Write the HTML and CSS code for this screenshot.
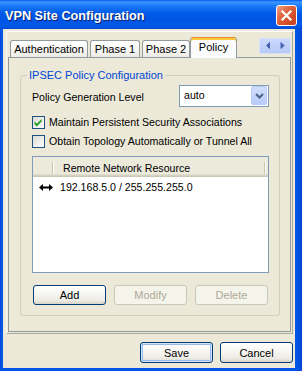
FILE: index.html
```html
<!DOCTYPE html>
<html>
<head>
<meta charset="utf-8">
<title>VPN Site Configuration</title>
<link rel="stylesheet" href="styles.css">
</head>
<body>
<div class="window">
  <div class="titlebar">
    <span class="title">VPN Site Configuration</span>
    <span class="close"><svg width="19" height="19" viewBox="0 0 19 19"><path d="M5.5 5.5 L13.5 13.5 M13.5 5.5 L5.5 13.5" stroke="#fff" stroke-width="2.2" stroke-linecap="square" fill="none"/></svg></span>
  </div>
  <div class="body">
    <div class="frame">
      <div class="tabctl">
        <div class="tabstrip">
          <div class="tab tab-auth">Authentication</div>
          <div class="tab tab-p1">Phase 1</div>
          <div class="tab tab-p2">Phase 2</div>
          <div class="tab tab-sel">Policy</div>
          <div class="scroller">
            <svg width="30" height="14" viewBox="0 0 30 14"><path d="M9.5 3.5 L6.5 6.5 L9.5 9.5 Z M21 3.5 L24 6.5 L21 9.5 Z" fill="#4964B4" stroke="#4964B4" stroke-width="1"/></svg>
          </div>
        </div>
        <div class="panel">
          <fieldset class="group">
            <legend class="group-title">IPSEC Policy Configuration</legend>
            <div class="gbody">
              <div class="level-row">
                <span class="level-label">Policy Generation Level</span>
                <div class="combo">
                  <span class="combo-text">auto</span>
                  <span class="combo-drop"><svg width="9" height="6" viewBox="0 0 9 6"><path d="M1 1 L4.5 4.5 L8 1" stroke="#4D6185" stroke-width="2" fill="none"/></svg></span>
                </div>
              </div>
              <div class="check check-first">
                <span class="cbox"><svg width="11" height="11" viewBox="0 0 11 11"><path d="M1.5 4.5 L3.8 6.8 L8.6 2 L8.6 4.6 L3.8 9.4 L1.5 7.1 Z" fill="#21A121"/></svg></span>
                <span class="clabel">Maintain Persistent Security Associations</span>
              </div>
              <div class="check check-second">
                <span class="cbox"></span>
                <span class="clabel">Obtain Topology Automatically or Tunnel All</span>
              </div>
              <div class="list">
                <div class="lhead">
                  <span class="hcol hcol-icon"></span>
                  <span class="hdiv"></span>
                  <span class="hcol hcol-name">Remote Network Resource</span>
                  <span class="hdiv"></span>
                </div>
                <div class="lbody">
                  <div class="lrow">
                    <span class="licon"><svg width="14" height="7" viewBox="0 0 14 7"><path d="M0 3.5 L4 0 L4 2.5 L10 2.5 L10 0 L14 3.5 L10 7 L10 4.5 L4 4.5 L4 7 Z" fill="#000"/></svg></span>
                    <span class="ltext">192.168.5.0 / 255.255.255.0</span>
                  </div>
                </div>
              </div>
              <div class="btnrow">
                <button class="btn">Add</button>
                <button class="btn" disabled>Modify</button>
                <button class="btn" disabled>Delete</button>
              </div>
            </div>
          </fieldset>
        </div>
      </div>
    </div>
    <div class="footer">
      <button class="btn btn-default">Save</button>
      <button class="btn">Cancel</button>
    </div>
  </div>
</div>
</body>
</html>
```
FILE: styles.css
```css
* { box-sizing: border-box; }
html, body { margin: 0; padding: 0; }
body {
  width: 302px;
  height: 371px;
  overflow: hidden;
  font-family: "Liberation Sans", Arial, sans-serif;
  font-size: 10.6px;
  color: #000;
  background: #0055E5;
}
.window {
  width: 302px;
  height: 371px;
  display: flex;
  flex-direction: column;
  background: linear-gradient(to right, #0838C8 0, #0A5AEA 1px, #0055E5 3px, #0055E5 297px, #0848D8 301px);
}
.titlebar {
  flex: none;
  height: 29px;
  display: flex;
  align-items: flex-start;
  padding: 0 5px 0 5px;
  background: linear-gradient(to bottom, #0058EE 0px, #3D95FF 2px, #2C87FB 4px, #126FF2 8px, #0059E8 14px, #0054E3 20px, #0058EA 25px, #0052DE 28px, #0048CC 29px);
}
.title {
  margin-top: 8px;
  line-height: 16px;
  font-size: 12.7px;
  font-weight: bold;
  color: #fff;
  text-shadow: 1px 1px 0 #0A1E6A;
  white-space: nowrap;
}
.close {
  margin-left: auto;
  margin-top: 5px;
  width: 21px;
  height: 21px;
  border: 1px solid #fff;
  border-radius: 3px;
  background: linear-gradient(135deg, #F0A58A 0%, #E26A45 35%, #D24E27 70%, #C2421E 100%);
  display: flex;
}
.body {
  flex: 1;
  margin: 0 7px 3px 3px;
  background: #ECE9D8;
  display: flex;
  flex-direction: column;
}
.frame {
  margin: 2px 2px 0 3px;
  height: 303px;
  border: 1px solid #FFFFFF;
  border-right-color: #ACA899;
  border-bottom-color: #ACA899;
  display: flex;
  flex-direction: column;
}
.tabctl {
  flex: 1;
  margin: 4px 1px 1px 1px;
  display: flex;
  flex-direction: column;
}
.tabstrip {
  flex: none;
  height: 21px;
  display: flex;
  align-items: flex-end;
  padding-left: 2px;
}
.tab {
  height: 17px;
  border: 1px solid #919B9C;
  border-bottom: none;
  border-radius: 3px 3px 0 0;
  background: linear-gradient(to bottom, #FFFFFF, #F7F7F4 50%, #ECEBE5);
  text-align: center;
  font-size: 11px;
  line-height: 14px;
  padding-top: 1px;
  white-space: nowrap;
}
.tab-auth { width: 78px; margin-right: 2px; }
.tab-p1 { width: 50px; margin-right: 2px; }
.tab-p2 { width: 48px; }
.tab-sel {
  width: 47px;
  height: 21px;
  margin-bottom: -1px;
  position: relative;
  z-index: 1;
  background: #FCFCFE;
  border-top: 1px solid #E68B2C;
  box-shadow: inset 0 2px 0 #FFC83C;
  padding-top: 2px;
}
.scroller {
  align-self: flex-start;
  margin-left: auto;
  margin-top: 2px;
  width: 32px;
  height: 16px;
  border: 1px solid #D6E0F8;
  border-radius: 2px;
  background: linear-gradient(to bottom, #CBD9FC, #B6C9F6);
  display: flex;
}
.panel {
  flex: 1;
  border: 1px solid #919B9C;
  background: #ECE9D8;
  display: flex;
  flex-direction: column;
}
.group {
  margin: 11px 10px 0 11px;
  padding: 0;
  min-width: 0;
  border: 1px solid #D0D0BF;
  border-radius: 3px;
}
.group-title {
  margin-left: 6px;
  padding: 0 2px;
  line-height: 13px;
  font-size: 11px;
  color: #0046D5;
}
.gbody {
  padding: 3px 10px 10px 11px;
}
.level-row {
  display: flex;
  align-items: flex-start;
  justify-content: space-between;
}
.level-label {
  margin-top: 6px;
  line-height: 13px;
}
.combo {
  width: 90px;
  height: 22px;
  border: 1px solid #7F9DB9;
  background: #fff;
  display: flex;
  align-items: flex-start;
}
.combo-text {
  padding-left: 4px;
  line-height: 19px;
}
.combo-drop {
  margin-left: auto;
  margin-right: 1px;
  width: 16px;
  height: 19px;
  border: 1px solid #BACCF5;
  border-radius: 2px;
  background: linear-gradient(to bottom, #D1DEFD, #B8CBF8);
  display: flex;
  align-items: center;
  justify-content: center;
}
.check {
  display: flex;
  align-items: flex-start;
  height: 13px;
}
.check-first { margin-top: 9px; }
.check-second { margin-top: 6px; }
.cbox {
  width: 13px;
  height: 13px;
  border: 1px solid #1C5180;
  background: linear-gradient(135deg, #DCDCD7 0%, #F0F0EC 60%, #FFFFFF 100%);
  display: flex;
}
.clabel {
  margin-left: 4px;
  line-height: 13px;
  white-space: nowrap;
}
.list {
  margin-top: 8px;
  height: 117px;
  border: 1px solid #7F9DB9;
  background: #fff;
}
.lhead {
  display: flex;
  align-items: flex-start;
  height: 20px;
  background: #EBEADB;
  box-shadow: inset 0 -1px 0 #CBC7B8, inset 0 -2px 0 #D6D2C2, inset 0 -3px 0 #E2DECD;
}
.hcol {
  line-height: 18px;
  padding-top: 2px;
  white-space: nowrap;
}
.hcol-icon { width: 19px; }
.hcol-name { width: 210px; padding-left: 9px; }
.hdiv {
  width: 2px;
  height: 12px;
  margin-top: 5px;
  border-left: 1px solid #C7C5B2;
  border-right: 1px solid #FFFFFF;
}
.lbody { padding-top: 2px; }
.lrow {
  display: flex;
  align-items: center;
  height: 16px;
  padding-left: 6px;
}
.licon { display: flex; margin-right: 7px; }
.ltext { line-height: 16px; white-space: nowrap; }
.btnrow {
  display: flex;
  gap: 8px;
  margin-top: 12px;
  padding-left: 1px;
}
.btn {
  width: 73px;
  height: 20px;
  padding: 0;
  border: 1px solid #003C74;
  border-radius: 3px;
  background: linear-gradient(to bottom, #FFFFFF 0%, #F7F6F2 40%, #ECEBE4 80%, #D8D3C8 100%);
  font-family: "Liberation Sans", Arial, sans-serif;
  font-size: 11px;
  color: #000;
  line-height: 16px;
}
.btn:disabled {
  border-color: #C9C7BA;
  background: #F5F4EA;
  color: #ACA899;
}
.footer {
  display: flex;
  justify-content: flex-end;
  gap: 7px;
  margin: 8px 2px 0 0;
}
.footer .btn { height: 21px; }
.btn-default {
  box-shadow: inset 0 0 0 1px #CEE7FF, inset 0 0 0 2px #98B8EA;
}
```
